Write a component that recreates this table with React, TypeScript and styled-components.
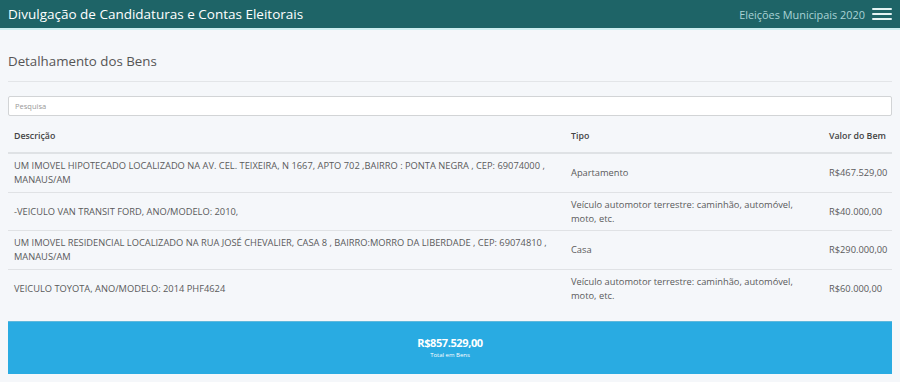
import React from "react";
import styled, { createGlobalStyle } from "styled-components";

const GlobalStyle = createGlobalStyle`
  html, body {
    margin: 0;
    padding: 0;
    background: #f5f7fa;
    font-family: "Open Sans", "Noto Sans", sans-serif;
  }
`;

const Header = styled.header`
  height: 28px;
  display: flex;
  align-items: center;
  justify-content: space-between;
  padding: 0 8px;
  background: #1e6467;
  border-bottom: 2px solid #cdeef0;
`;

const Brand = styled.div`
  color: #ffffff;
  font-size: 13.5px;
  letter-spacing: 0;
`;

const HeaderRight = styled.div`
  display: flex;
  align-items: center;
  gap: 7px;
`;

const Election = styled.span`
  color: #a9d3d5;
  font-size: 10.9px;
`;

const Burger = styled.button`
  display: flex;
  flex-direction: column;
  gap: 3px;
  width: 20px;
  padding: 0;
  background: none;
  border: 0;
`;

const BurgerBar = styled.span`
  display: block;
  height: 2px;
  background: #e4f3f3;
  border-radius: 1px;
`;

const Main = styled.main`
  padding: 0 8px;
`;

const PageTitle = styled.h1`
  margin: 0;
  padding-top: 21px;
  padding-bottom: 10px;
  font-size: 13.3px;
  font-weight: 400;
  color: #555;
  line-height: 20px;
  border-bottom: 1px solid #e3e5e8;
`;

const Search = styled.input`
  display: block;
  box-sizing: border-box;
  width: 100%;
  height: 20px;
  margin-top: 14px;
  padding: 0 6px;
  border: 1px solid #d2d4d6;
  border-radius: 2px;
  background: #fff;
  font-family: inherit;
  font-size: 7.5px;
  color: #555;
  &::placeholder {
    color: #999;
  }
`;

const Table = styled.table`
  width: 100%;
  border-collapse: collapse;
  table-layout: fixed;
  font-size: 9.3px;
  color: #5a5a5a;
`;

const HeadCell = styled.th<{ $w: number }>`
  box-sizing: border-box;
  width: ${(p) => p.$w}px;
  text-align: left;
  font-weight: 600;
  font-size: 8.8px;
  color: #444;
  padding: 13px 6px 9px;
  line-height: 14px;
  border-bottom: 2px solid #dfe2e5;
`;

const Row = styled.tr`
  &:last-child td {
    border-bottom: 0;
  }
`;

const Cell = styled.td`
  padding: 5px 6px 4.5px;
  line-height: 14px;
  vertical-align: middle;
  border-bottom: 1px solid #e0e2e5;
`;

const Total = styled.div`
  margin-top: 14px;
  height: 53px;
  box-sizing: border-box;
  background: #29abe2;
  border-top: 1px solid #5fb8dc;
  display: flex;
  flex-direction: column;
  align-items: center;
  justify-content: center;
  color: #fff;
`;

const TotalValue = styled.div`
  font-size: 11px;
  font-weight: 700;
  line-height: 14px;
  letter-spacing: -0.4px;
`;

const TotalLabel = styled.div`
  font-size: 6px;
  line-height: 9px;
  margin-top: 1px;
`;

const rows = [
  {
    d: "UM IMOVEL HIPOTECADO LOCALIZADO NA AV. CEL. TEIXEIRA, N 1667, APTO 702 ,BAIRRO : PONTA NEGRA , CEP: 69074000 , MANAUS/AM",
    t: "Apartamento",
    v: "R$467.529,00",
  },
  {
    d: "-VEICULO VAN TRANSIT FORD, ANO/MODELO: 2010,",
    t: "Veículo automotor terrestre: caminhão, automóvel, moto, etc.",
    v: "R$40.000,00",
  },
  {
    d: "UM IMOVEL RESIDENCIAL LOCALIZADO NA RUA JOSÉ CHEVALIER, CASA 8 , BAIRRO:MORRO DA LIBERDADE , CEP: 69074810 , MANAUS/AM",
    t: "Casa",
    v: "R$290.000,00",
  },
  {
    d: "VEICULO TOYOTA, ANO/MODELO: 2014 PHF4624",
    t: "Veículo automotor terrestre: caminhão, automóvel, moto, etc.",
    v: "R$60.000,00",
  },
];

export default function App() {
  return (
    <>
      <GlobalStyle />
      <Header>
        <Brand>Divulgação de Candidaturas e Contas Eleitorais</Brand>
        <HeaderRight>
          <Election>Eleições Municipais 2020</Election>
          <Burger aria-label="menu">
            <BurgerBar />
            <BurgerBar />
            <BurgerBar />
          </Burger>
        </HeaderRight>
      </Header>
      <Main>
        <PageTitle>Detalhamento dos Bens</PageTitle>
        <Search placeholder="Pesquisa" />
        <Table>
          <thead>
            <tr>
              <HeadCell $w={557}>Descrição</HeadCell>
              <HeadCell $w={258}>Tipo</HeadCell>
              <HeadCell $w={69}>Valor do Bem</HeadCell>
            </tr>
          </thead>
          <tbody>
            {rows.map((r, i) => (
              <Row key={i}>
                <Cell>{r.d}</Cell>
                <Cell>{r.t}</Cell>
                <Cell>{r.v}</Cell>
              </Row>
            ))}
          </tbody>
        </Table>
        <Total>
          <TotalValue>R$857.529,00</TotalValue>
          <TotalLabel>Total em Bens</TotalLabel>
        </Total>
      </Main>
    </>
  );
}
